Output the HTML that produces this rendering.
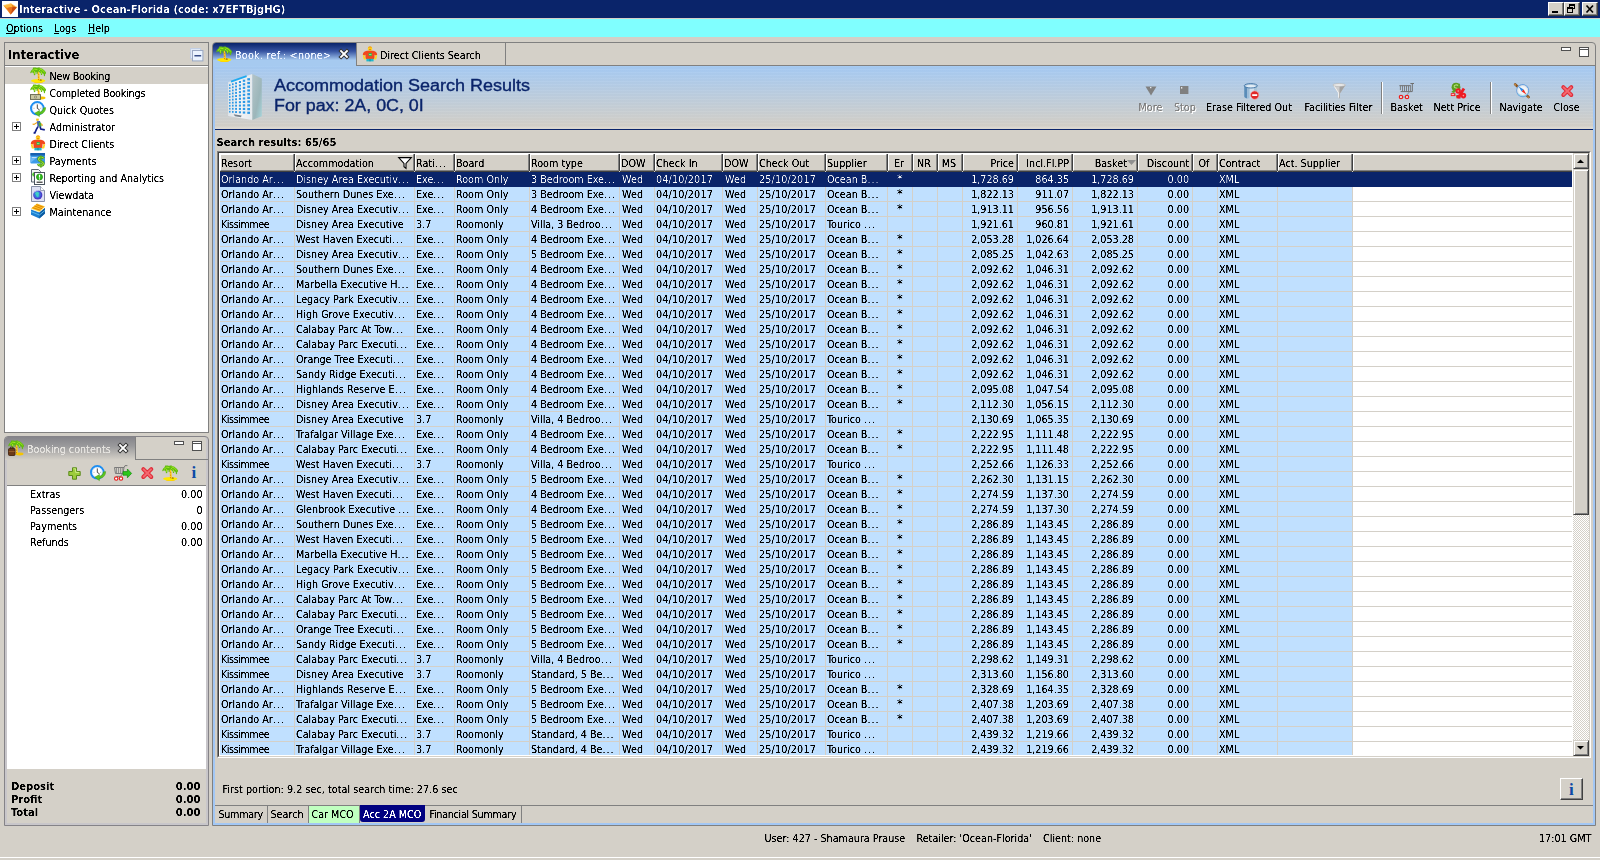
<!DOCTYPE html><html><head><meta charset="utf-8"><title>Interactive - Ocean-Florida</title><style>
*{box-sizing:border-box}
html,body{margin:0;padding:0}
body{width:1600px;height:860px;overflow:hidden;background:#d4d0c8;position:relative;font-family:"DejaVu Sans Condensed","Liberation Sans",sans-serif;font-size:10.7px;color:#000;line-height:13px}
.a{position:absolute;white-space:nowrap}
.b{font-weight:bold}
.t{filter:url(#cr)}
.t2{filter:url(#cr2)}
.t3{filter:url(#cr3)}
span.t{display:inline-block}
#flt{position:absolute;left:0;top:0;width:0;height:0}
svg{position:absolute;overflow:visible}
#tb{left:0;top:0;width:1600px;height:18px;background:#0a246a}
#tt{left:19px;top:3px;color:#fff;font-weight:bold;font-size:11.1px;line-height:14px}
.wb{top:2px;width:16px;height:14px;background:#d4d0c8;border:1px solid;border-color:#fff #404040 #404040 #fff;box-shadow:inset -1px -1px 0 #808080}
#mb{left:0;top:19px;width:1600px;height:18px;background:#80ffff}
.mi{top:22px}
.mi u{text-decoration:underline}
/* left panel */
#lp{left:4px;top:42px;width:205px;height:391px;border:1px solid #808080;background:#fff}
#lph{left:0;top:0;width:203px;height:23px;background:#d4d0c8;border-bottom:1px solid #808080}
#lpt{left:3px;top:4px;font-weight:bold;font-size:12.9px;line-height:16px}
.tr{left:0;width:203px;height:17px}
.tr span{position:absolute;left:44.5px;top:3px}
.pm{position:absolute;left:7px;top:4px;width:9px;height:9px;border:1px solid #808080;background:#fff}
.pm:before{content:"";position:absolute;left:1px;top:3px;width:5px;height:1px;background:#000}
.pm:after{content:"";position:absolute;left:3px;top:1px;width:1px;height:5px;background:#000}
/* booking contents */
#bc{left:4px;top:436px;width:205px;height:390px;border:1px solid #858388;border-radius:4px 4px 0 0;background:#d4d0c8;box-shadow:inset 2px 0 0 #c8c6ca,inset -2px 0 0 #c8c6ca,inset 0 -2px 0 #c8c6ca}
#bct{left:0;top:0;width:131px;height:23px;border-radius:3px 0 0 0;background:linear-gradient(#85848a,#9a9a9c 40%,#d4d0c8);border-right:1px solid #808080}
#bcl{left:2px;top:49px;width:199px;height:283px;background:#fff}
.br{left:30px}
.bv{right:1402.5px}
.tot{font-weight:bold;font-size:11.1px}
/* right panel */
#rp{left:212px;top:42px;width:1384px;height:784px;border:1px solid #808080;border-radius:4px 4px 0 0;background:#d4d0c8}
#rpi{left:213px;top:66px;width:1382px;height:759px;border:2px solid #a2c7f5;border-top:0}
#tab1{left:213px;top:43px;width:143px;height:23px;border-radius:3px 0 0 0;background:linear-gradient(#0a246a,#3552a0 35%,#a6caf0 75%)}
#tab2{left:356px;top:43px;width:150px;height:23px;border-right:1px solid #808080;border-left:1px solid #808080}
#tabline{left:356px;top:65px;width:1239px;height:1px;background:#808080}
#hd{left:215px;top:66px;width:1378px;height:63px;background:linear-gradient(#a4c9f2,#aacbf0 8%,#d4d0c8 96%,#dedad2 97%)}
#hd:after{content:"";position:absolute;left:0;top:0;right:0;bottom:0;background:repeating-linear-gradient(rgba(255,255,255,.035) 0 1px,rgba(0,0,40,.01) 1px 3px)}
#hdl{left:215px;top:129px;width:1378px;height:1px;background:#0a246a}
.ttl{left:274px;color:#0a246a;font-family:"Liberation Sans",sans-serif;font-size:16px;line-height:20px;transform:scaleX(1.115);transform-origin:0 0;-webkit-text-stroke:.35px #0a246a}
.tbt{top:101px;line-height:13px}
.dis{color:#808080;text-shadow:1px 1px 0 #fff}
.sep{top:82px;width:2px;height:32px;border-left:1px solid #808080;border-right:1px solid #fff}
/* table */
#tf{left:217px;top:151px;width:1374px;height:607px;border:1px solid;border-color:#808080 #fff #fff #808080;background:#fff}
#tf2{left:218px;top:152px;width:1372px;height:605px;border:1px solid;border-color:#404040 #d4d0c8 #d4d0c8 #404040}
#th{left:219px;top:153px;width:1353px;height:19px;background:#d4d0c8;border-left:1px solid #fff}
.h{position:absolute;top:0;height:19px;border:1px solid;border-color:#fff #808080 #808080 #fff;border-top-width:2px;padding:2px 2px 0 0;overflow:hidden;line-height:13px;box-shadow:1px 0 0 #404040,0 1px 0 #404040;height:18px}
#th:after{content:"";position:absolute;left:0;right:0;top:0;height:1px;background:#fff}
#rows{left:220px;top:172px;width:1352px;height:583px;overflow:hidden;background:
 repeating-linear-gradient(transparent 0 14px,#d4d0c8 14px 15px)}
#cells{left:0;top:0;width:1133px;height:583px;background:repeating-linear-gradient(#c0e0ff 0 14px,#d4d0c8 14px 15px)}
.vl{position:absolute;top:0;width:1px;height:583px;background:#d4d0c8}
.r{position:absolute;left:0;width:1352px;height:15px}
.r i{position:absolute;top:0;font-style:normal;line-height:13px;padding-top:1px;height:14px;overflow:hidden}
.sel{color:#fff}
.r i.c6,.r i.c8{letter-spacing:.15px}
.r i.c5,.r i.c7{padding-left:1px;letter-spacing:.1px}
.r i.c10{font-size:13px;line-height:13px;padding-top:0}
#rt{left:0;top:0;width:1352px;height:583px}
.r b,.h b{font-weight:normal;letter-spacing:.95px}
.c0{left:1px;width:72px}
.c1{left:76px;width:117px}
.c2{left:196px;width:37px}
.c3{left:236px;width:72px}
.c4{left:311px;width:87px}
.c5{left:401px;width:32px}
.c6{left:436px;width:65px}
.c7{left:504px;width:32px}
.c8{left:539px;width:65px}
.c9{left:607px;width:59px}
.c10{left:668px;width:24px;text-align:center}
.c11{left:693px;width:24px;text-align:center}
.c12{left:718px;width:24px;text-align:center}
.c13{left:743px;width:51px;text-align:right}
.c14{left:798px;width:51px;text-align:right}
.c15{left:853px;width:61px;text-align:right}
.c16{left:918px;width:51px;text-align:right}
.c17{left:973px;width:24px;text-align:center}
.c18{left:999px;width:57px}
.c19{left:1059px;width:72px}

/* scrollbar */
#sb{left:1573px;top:153px;width:16px;height:603px;background:repeating-conic-gradient(#fff 0 25%,#d4d0c8 0 50%) 0 0/2px 2px}
.sbb{position:absolute;left:0;width:16px;height:16px;background:#d4d0c8;border:1px solid;border-color:#d4d0c8 #404040 #404040 #d4d0c8;box-shadow:inset 1px 1px 0 #fff,inset -1px -1px 0 #808080}
#ibt{left:1560px;top:778px;width:23px;height:22px;background:#d4d0c8;border:1px solid;border-color:#fff #404040 #404040 #fff;box-shadow:inset -1px -1px 0 #808080}
#btl{left:215px;top:805px;width:1378px;height:1px;background:#808080}
.bt{top:806px;height:17px;line-height:13px;padding-top:2px;border-right:1px solid #808080}
#st{top:831.5px}
</style></head><body><svg id="flt" width="0" height="0"><filter id="cr" x="0" y="0" width="1" height="1" color-interpolation-filters="sRGB"><feComponentTransfer><feFuncA type="linear" slope="2.6" intercept="-0.55"/></feComponentTransfer></filter><filter id="cr3" x="0" y="0" width="1" height="1" color-interpolation-filters="sRGB"><feComponentTransfer><feFuncA type="linear" slope="2.2" intercept="-0.55"/></feComponentTransfer></filter><filter id="cr2" x="0" y="0" width="1" height="1" color-interpolation-filters="sRGB"><feComponentTransfer><feFuncA type="linear" slope="1.8" intercept="-0.6"/></feComponentTransfer></filter></svg><div class="a" id="tb"></div><svg style="left:2px;top:1px" width="16" height="16" viewBox="0 0 16 16"><rect width="16" height="16" fill="#fff"/><path d="M1.4 4.4 L9 2.6 L15 6.2 L8.6 13.6 Z" fill="#f28a1c"/><path d="M1.4 4.4 L9 2.6 L10.4 5.8 L5 7 Z" fill="#ffb63c"/><path d="M10.4 5.8 L15 6.2 L8.6 13.6 Z" fill="#c84a10"/><path d="M5 7 L10.4 5.8 L8.6 13.6 Z" fill="#e8701c"/><path d="M1.4 4.4 L9 2.6 L15 6.2" stroke="#ffe08a" stroke-width=".6" fill="none"/></svg><div class="a t2" id="tt">Interactive - Ocean-Florida (code: x7EFTBjgHG)</div><div class="a wb" style="left:1548px"><svg style="left:0;top:0" width="14" height="12" viewBox="0 0 14 12"><rect x="3" y="8" width="6" height="2" fill="#000"/></svg></div><div class="a wb" style="left:1564px"><svg style="left:0;top:0" width="14" height="12" viewBox="0 0 14 12"><rect x="4.5" y="1.5" width="5" height="4" fill="none" stroke="#000"/><rect x="4" y="1" width="6" height="2" fill="#000"/><rect x="2.5" y="4.5" width="5" height="5" fill="#d4d0c8" stroke="#000"/><rect x="2" y="4" width="6" height="2" fill="#000"/></svg></div><div class="a wb" style="left:1582px"><svg style="left:0;top:0" width="14" height="12" viewBox="0 0 14 12"><path d="M3.5 2.5 L10 9.5 M10 2.5 L3.5 9.5" stroke="#000" stroke-width="1.7"/></svg></div><div class="a" id="mb"></div><div class="a t mi" style="left:6px"><u>O</u>ptions</div><div class="a t mi" style="left:54px"><u>L</u>ogs</div><div class="a t mi" style="left:88px"><u>H</u>elp</div><div class="a" id="lp"><div class="a" id="lph"><div class="a t3" id="lpt">Interactive</div><svg style="left:185px;top:5px" width="14" height="14" viewBox="0 0 14 14"><rect x=".5" y=".5" width="10" height="10" fill="#dfe8f6" stroke="#c2cfe4"/><rect x="2.5" y="2.5" width="10.4" height="10.4" fill="#eaf3ff" stroke="#9aa8c4"/><rect x="4.4" y="7.2" width="6.8" height="1.2" fill="#0a246a"/></svg></div><div class="a tr" style="top:24px;background:#d4d0c8"><svg style="left:25px;top:0px" width="16" height="16" viewBox="0 0 16 16"><ellipse cx="8.4" cy="14.8" rx="5" ry="1.2" fill="#ffcc00"/><ellipse cx="8.2" cy="13.8" rx="7.1" ry="1.7" fill="#ffe800"/><ellipse cx="10.6" cy="13" rx="1.3" ry=".6" fill="#6a3c08"/><path d="M7.3 4.4 L8.7 4.2 L9.5 7 L9.9 13.4 L7.9 13.6 L7.7 8.6Z" fill="#ffd21a"/><path d="M8.4 6.6 L9.3 7.4 L8.6 8.4Z M8 9.6 L9 10 L8.2 11Z M8.1 12 L9.2 12.3 L8.3 13.4Z M7.5 4.6 L8.2 5.4 L7.6 6.6Z" fill="#cc5a0c"/><path d="M.2 5.6 L1.2 3.6 L2.6 2.2 L3.2 .6 L6 .4 L7 1 L8 .4 L9.6 .4 L10.4 1.2 L12 1.6 L13.6 2.8 L15 4 L16 5.4 L16 7 L15.2 6.6 L15 9 L14 9.2 L13.6 7 L12.4 6 L12 8 L11 8 L10.6 6 L9.6 5.4 L8.4 4.6 L7.7 5 L7.6 7 L6.6 7 L6.4 5 L5.6 5 L5.2 8 L4 8.2 L3.6 6 L2.6 5.4 L1.4 5.4 L1 6.4Z" fill="#62bc10"/><path d="M2 4.4 L4.6 2.2 L7.4 2.6 M9.6 1.8 L12.2 3 L14.6 5.2 M4.6 4 L4.6 6.8 M11.4 4.6 L11.6 6.8 M9 3 L10.4 4.4" stroke="#9ee81e" stroke-width="1" fill="none"/></svg><span class="t" style="letter-spacing:-.2px">New Booking</span></div><div class="a tr" style="top:41px"><svg style="left:25px;top:0px" width="16" height="16" viewBox="0 0 16 16"><ellipse cx="11.5" cy="14" rx="4" ry="1.4" fill="#f5c400"/><path d="M7.3 4.4 L8.7 4.2 L9.5 7 L9.9 13.4 L7.9 13.6 L7.7 8.6Z" fill="#ffd21a"/><path d="M8.4 6.6 L9.3 7.4 L8.6 8.4Z M8 9.6 L9 10 L8.2 11Z M8.1 12 L9.2 12.3 L8.3 13.4Z M7.5 4.6 L8.2 5.4 L7.6 6.6Z" fill="#cc5a0c"/><path d="M.2 5.6 L1.2 3.6 L2.6 2.2 L3.2 .6 L6 .4 L7 1 L8 .4 L9.6 .4 L10.4 1.2 L12 1.6 L13.6 2.8 L15 4 L16 5.4 L16 7 L15.2 6.6 L15 9 L14 9.2 L13.6 7 L12.4 6 L12 8 L11 8 L10.6 6 L9.6 5.4 L8.4 4.6 L7.7 5 L7.6 7 L6.6 7 L6.4 5 L5.6 5 L5.2 8 L4 8.2 L3.6 6 L2.6 5.4 L1.4 5.4 L1 6.4Z" fill="#62bc10"/><path d="M2 4.4 L4.6 2.2 L7.4 2.6 M9.6 1.8 L12.2 3 L14.6 5.2 M4.6 4 L4.6 6.8 M11.4 4.6 L11.6 6.8 M9 3 L10.4 4.4" stroke="#9ee81e" stroke-width="1" fill="none"/><rect x=".5" y="10.6" width="10" height="4.8" fill="#c9c7a2" stroke="#5f5f48" stroke-width=".9"/><circle cx="5.5" cy="13" r="1.5" fill="#8d8b70"/><circle cx="5.5" cy="13" r=".6" fill="#e8e6c8"/></svg><span class="t" style="letter-spacing:-.2px">Completed Bookings</span></div><div class="a tr" style="top:58px"><svg style="left:25px;top:0px" width="16" height="16" viewBox="0 0 16 16"><circle cx="7.3" cy="7.3" r="6.3" fill="#fff" stroke="#1b8df2" stroke-width="2"/><circle cx="7.3" cy="7.3" r="5" fill="none" stroke="#bcd8f2" stroke-width=".7"/><path d="M7.3 3.4v4l2.3 1.5" stroke="#333" stroke-width=".9" fill="none"/><path d="M3.6 7.3h.8M10.3 7.3h.8M7.3 3h0M7.3 11v.7" stroke="#777" stroke-width=".7"/><path d="M15.6 6.6 C15.6 10.8 12.6 13.4 9.4 13.2 L9.4 15.6 L4.8 12.2 L9.4 9.6 L9.4 11.2 C11.4 11 13 9.6 13.4 7 Z" fill="#5cc41e" stroke="#3a9a0c" stroke-width=".5"/></svg><span class="t">Quick Quotes</span></div><div class="a tr" style="top:75px"><div class="pm"></div><svg style="left:25px;top:0px" width="16" height="16" viewBox="0 0 16 16"><path d="M6 .8 L8.6 .4 L9 2.6 L6.6 3 Z" fill="#f5c518"/><path d="M6.8 3.2 L10 3 L11.4 8 L7.6 9 Z" fill="#3f5fae"/><path d="M8.4 4.6 L11 4.8 L11.6 8.6 L9.4 8.8 Z" fill="#4fae32"/><path d="M7 4.6 L4 6.4 L2.6 6.2" stroke="#f2a81c" stroke-width="1.2" fill="none"/><path d="M11.2 5.6 L12.6 7.6" stroke="#f2a81c" stroke-width="1.1"/><path d="M8 8.6 L6.4 11.4 L4.8 15 L3.6 14.6" stroke="#14208a" stroke-width="1.7" fill="none"/><path d="M10 8.6 L10.8 11 L14.8 11.8" stroke="#14208a" stroke-width="1.7" fill="none"/></svg><span class="t">Administrator</span></div><div class="a tr" style="top:92px"><svg style="left:25px;top:0px" width="16" height="16" viewBox="0 0 16 16"><circle cx="8" cy="2.8" r="2.3" fill="#ffd41c"/><path d="M6 1.6 C6.6 .2 9.4 .2 10 1.6Z" fill="#f08a10"/><path d="M7 3.4h2" stroke="#c8500c" stroke-width=".6"/><path d="M.8 9 C.8 6.4 2.6 5 5 4.8 L11 4.8 C13.4 5 15.2 6.4 15.2 9 L13.2 9.6 L12.6 8.4 L12.4 13 L3.6 13 L3.4 8.4 L2.8 9.6 Z" fill="#f2481c"/><path d="M1.6 9.2 L2.4 12.6 L3.8 12.8 M14.4 9.2 L13.6 12.6 L12.2 12.8" stroke="#ffd41c" stroke-width="1.7" fill="none"/><rect x="6.6" y="7" width="3.2" height="3" fill="#32b44a"/><path d="M7 8.6h2.4" stroke="#e8f8a0" stroke-width=".6"/><rect x="4.4" y="12.8" width="7.2" height="2.6" fill="#22b8cc"/><path d="M8 13v2.4" stroke="#0d7688" stroke-width=".7"/></svg><span class="t">Direct Clients</span></div><div class="a tr" style="top:109px"><div class="pm"></div><svg style="left:25px;top:0px" width="16" height="16" viewBox="0 0 16 16"><rect x=".4" y="1" width="14.6" height="10.6" rx="1" fill="#3b9be8"/><rect x=".4" y="1" width="14.6" height="2.6" fill="#1660b0"/><path d="M.6 6.4 L8 4.4 L.6 10.8Z" fill="#6cb8f4"/><rect x="1.6" y="5" width="5" height="1" fill="#bfe0fa"/><path d="M13.6 6.4 C12.6 4.6 8.4 4.8 8.6 7.4 C8.8 9.8 13.4 9 13.4 11.6 C13.2 14 9 14 8 12" stroke="#3e8a10" stroke-width="2.6" fill="none"/><path d="M13.6 6.4 C12.6 4.6 8.4 4.8 8.6 7.4 C8.8 9.8 13.4 9 13.4 11.6 C13.2 14 9 14 8 12" stroke="#9ade3c" stroke-width="1.3" fill="none"/><path d="M10.9 3.4v12.4" stroke="#5cae1c" stroke-width="1.3"/></svg><span class="t">Payments</span></div><div class="a tr" style="top:126px"><div class="pm"></div><svg style="left:25px;top:0px" width="16" height="16" viewBox="0 0 16 16"><path d="M1.5 .5h7l2 2v10.5h-9z" fill="#f4f4f4" stroke="#5a6670"/><circle cx="4.4" cy="5.4" r="2.2" fill="#4cc22a"/><rect x="4.5" y="3.5" width="10" height="12" fill="#fff" stroke="#4a545e"/><circle cx="9.5" cy="8" r="3.1" fill="#2eb81c" stroke="#1a8a0c" stroke-width=".6"/><path d="M9.5 5.8v2.8" stroke="#fff" stroke-width="1.2"/><circle cx="9.5" cy="9.9" r=".65" fill="#fff"/><path d="M6.6 13.2h6" stroke="#222" stroke-width="1.1"/></svg><span class="t">Reporting and Analytics</span></div><div class="a tr" style="top:143px"><svg style="left:25px;top:0px" width="16" height="16" viewBox="0 0 16 16"><path d="M1.5 .5h9l4 4v11h-13z" fill="#dfe2f4" stroke="#8890a8"/><path d="M10.5 .5v4h4" fill="#fff" stroke="#8890a8" stroke-width=".8"/><circle cx="7.8" cy="9" r="4.6" fill="#4a3cc8"/><circle cx="7.4" cy="8.6" r="3.4" fill="#3a74e0"/><path d="M5 7.4 C6 5.6 8.6 5.8 9.2 7.2 C8.2 8.6 9.6 9.6 8.2 11 C6.6 11.4 6.2 9.4 5 7.4Z" fill="#3ed0c4"/><path d="M4.6 6.4 C5.6 5 7 4.6 8.4 4.8" stroke="#cfe0ff" stroke-width=".8" fill="none"/></svg><span class="t">Viewdata</span></div><div class="a tr" style="top:160px"><div class="pm"></div><svg style="left:25px;top:0px" width="16" height="16" viewBox="0 0 16 16"><path d="M1 6.4 L9.4 9.6 L15 5 L15 10.4 L9.4 15.6 L1 11.8 Z" fill="#1d7fd0"/><path d="M9.4 9.6 L15 5 L15 10.4 L9.4 15.6Z" fill="#0d5aa0"/><path d="M1 8.6 L9.4 12 L15 7.4" stroke="#5cc0f4" stroke-width=".9" fill="none"/><path d="M1 5.6 L7 .6 L15 3.4 L9.4 8.8 Z" fill="#ffc21c"/><path d="M2.6 4.6 L10.8 7.4 M4.4 3 L12.4 5.8 M6.2 1.6 L13.8 4.4" stroke="#d87a0c" stroke-width=".9"/><path d="M1 5.6 L9.4 8.8 L15 3.4" stroke="#fff2a8" stroke-width=".6" fill="none"/></svg><span class="t">Maintenance</span></div></div><div class="a" id="bc"><div class="a" id="bct"><svg style="left:3px;top:3px" width="16" height="16" viewBox="0 0 16 16"><ellipse cx="11.5" cy="14" rx="4" ry="1.4" fill="#f5c400"/><path d="M7.3 4.4 L8.7 4.2 L9.5 7 L9.9 13.4 L7.9 13.6 L7.7 8.6Z" fill="#ffd21a"/><path d="M8.4 6.6 L9.3 7.4 L8.6 8.4Z M8 9.6 L9 10 L8.2 11Z M8.1 12 L9.2 12.3 L8.3 13.4Z M7.5 4.6 L8.2 5.4 L7.6 6.6Z" fill="#cc5a0c"/><path d="M.2 5.6 L1.2 3.6 L2.6 2.2 L3.2 .6 L6 .4 L7 1 L8 .4 L9.6 .4 L10.4 1.2 L12 1.6 L13.6 2.8 L15 4 L16 5.4 L16 7 L15.2 6.6 L15 9 L14 9.2 L13.6 7 L12.4 6 L12 8 L11 8 L10.6 6 L9.6 5.4 L8.4 4.6 L7.7 5 L7.6 7 L6.6 7 L6.4 5 L5.6 5 L5.2 8 L4 8.2 L3.6 6 L2.6 5.4 L1.4 5.4 L1 6.4Z" fill="#62bc10"/><path d="M2 4.4 L4.6 2.2 L7.4 2.6 M9.6 1.8 L12.2 3 L14.6 5.2 M4.6 4 L4.6 6.8 M11.4 4.6 L11.6 6.8 M9 3 L10.4 4.4" stroke="#9ee81e" stroke-width="1" fill="none"/><rect x=".5" y="8.5" width="6.5" height="7" rx="1" fill="#6b3a18" stroke="#3c1c08" stroke-width=".8"/><path d="M2.4 8.4v-1.3h2.7v1.3" stroke="#3c1c08" stroke-width=".8" fill="none"/><path d="M.8 11.5h6" stroke="#a86a32" stroke-width=".7"/></svg><div class="a t" style="left:22px;top:6px;color:#e4e2de">Booking contents</div><svg style="left:113px;top:6px" width="10" height="10" viewBox="0 0 10 10"><path d="M2.1 2.1 L7.9 7.9 M7.9 2.1 L2.1 7.9" stroke="#303030" stroke-width="3.8" stroke-linecap="square"/><path d="M2.1 2.1 L7.9 7.9 M7.9 2.1 L2.1 7.9" stroke="#fff" stroke-width="2" stroke-linecap="square"/></svg></div><svg style="left:169px;top:4px" width="30" height="12" viewBox="0 0 30 12"><rect x=".5" y=".5" width="9" height="3" fill="#fff" stroke="#505050"/><rect x="18.5" y=".5" width="9" height="9" fill="#fff" stroke="#505050"/><path d="M18 2.5h10" stroke="#505050"/></svg><div class="a" style="top:22px;height:1px;background:#808080;left:131px;width:72px"></div><div class="a" style="left:2px;top:24px;width:199px;height:25px;border-bottom:1px solid #808080"></div><svg style="left:63px;top:30px" width="13" height="13" viewBox="0 0 13 13"><path d="M4.5 .8h4v3.7h3.7v4h-3.7v3.7h-4v-3.7h-3.7v-4h3.7z" fill="#9ccc3c" stroke="#5a8a1c" stroke-width="1"/><path d="M5.4 1.8h2.2v3.6h3.6" stroke="#d0f08a" stroke-width=".9" fill="none"/></svg><svg style="left:85px;top:28px" width="16" height="16" viewBox="0 0 16 16"><circle cx="7.3" cy="7.3" r="6.3" fill="#fff" stroke="#1b8df2" stroke-width="2"/><circle cx="7.3" cy="7.3" r="5" fill="none" stroke="#bcd8f2" stroke-width=".7"/><path d="M7.3 3.4v4l2.3 1.5" stroke="#333" stroke-width=".9" fill="none"/><path d="M3.6 7.3h.8M10.3 7.3h.8M7.3 3h0M7.3 11v.7" stroke="#777" stroke-width=".7"/><path d="M15.6 6.6 C15.6 10.8 12.6 13.4 9.4 13.2 L9.4 15.6 L4.8 12.2 L9.4 9.6 L9.4 11.2 C11.4 11 13 9.6 13.4 7 Z" fill="#5cc41e" stroke="#3a9a0c" stroke-width=".5"/></svg><svg style="left:109px;top:28px" width="18" height="16" viewBox="0 0 18 16"><path d="M.5 2.5h9.5l-1 6h-7.5z" fill="none" stroke="#707070" stroke-width=".9"/><path d="M2.5 2.5v6M4.5 2.5v6M6.5 2.5v6M8.3 2.5v6" stroke="#808080" stroke-width=".8"/><path d="M10 2.6 L11 .6 h2.4" stroke="#707070" stroke-width=".9" fill="none"/><path d="M8.6 8.6 L6.6 11.4h-4" stroke="#707070" stroke-width=".9" fill="none"/><circle cx="2.2" cy="13.6" r="1.7" fill="#fff" stroke="#e81c1c" stroke-width="1.1"/><circle cx="7" cy="13.6" r="1.7" fill="#fff" stroke="#e81c1c" stroke-width="1.1"/><path d="M9 6.6h4.4v-2.6l4.2 4.4-4.2 4.4v-2.6h-4.4z" fill="#2cc81c" stroke="#148a0c" stroke-width=".7"/></svg><svg style="left:135.5px;top:30px" width="13" height="13" viewBox="0 0 13 13"><path d="M2.3 2.1 L10.3 10 M10.3 2.1 L2.3 10" stroke="#e02c38" stroke-width="4" stroke-linecap="round"/><path d="M2.6 2.4 L10 9.7 M10 2.4 L2.6 9.7" stroke="#f46870" stroke-width="2" stroke-linecap="round"/></svg><svg style="left:157px;top:28px" width="16" height="16" viewBox="0 0 16 16"><ellipse cx="8.4" cy="14.8" rx="5" ry="1.2" fill="#ffcc00"/><ellipse cx="8.2" cy="13.8" rx="7.1" ry="1.7" fill="#ffe800"/><ellipse cx="10.6" cy="13" rx="1.3" ry=".6" fill="#6a3c08"/><path d="M7.3 4.4 L8.7 4.2 L9.5 7 L9.9 13.4 L7.9 13.6 L7.7 8.6Z" fill="#ffd21a"/><path d="M8.4 6.6 L9.3 7.4 L8.6 8.4Z M8 9.6 L9 10 L8.2 11Z M8.1 12 L9.2 12.3 L8.3 13.4Z M7.5 4.6 L8.2 5.4 L7.6 6.6Z" fill="#cc5a0c"/><path d="M.2 5.6 L1.2 3.6 L2.6 2.2 L3.2 .6 L6 .4 L7 1 L8 .4 L9.6 .4 L10.4 1.2 L12 1.6 L13.6 2.8 L15 4 L16 5.4 L16 7 L15.2 6.6 L15 9 L14 9.2 L13.6 7 L12.4 6 L12 8 L11 8 L10.6 6 L9.6 5.4 L8.4 4.6 L7.7 5 L7.6 7 L6.6 7 L6.4 5 L5.6 5 L5.2 8 L4 8.2 L3.6 6 L2.6 5.4 L1.4 5.4 L1 6.4Z" fill="#62bc10"/><path d="M2 4.4 L4.6 2.2 L7.4 2.6 M9.6 1.8 L12.2 3 L14.6 5.2 M4.6 4 L4.6 6.8 M11.4 4.6 L11.6 6.8 M9 3 L10.4 4.4" stroke="#9ee81e" stroke-width="1" fill="none"/></svg><span style="position:absolute;left:186.5px;top:28px;font:bold 17px 'Liberation Serif',serif;line-height:16px;color:#0c4aa6">i</span><div class="a" id="bcl"></div></div><div class="a t br" style="top:487.5px">Extras</div><div class="a t" style="right:1397.5px;top:487.5px">0.00</div><div class="a t br" style="top:503.5px">Passengers</div><div class="a t" style="right:1397.5px;top:503.5px">0</div><div class="a t br" style="top:519.5px">Payments</div><div class="a t" style="right:1397.5px;top:519.5px">0.00</div><div class="a t br" style="top:535.5px">Refunds</div><div class="a t" style="right:1397.5px;top:535.5px">0.00</div><div class="a t3 tot" style="left:11px;top:779.5px">Deposit</div><div class="a t3 tot" style="right:1399.5px;top:779.5px">0.00</div><div class="a t3 tot" style="left:11px;top:792.5px">Profit</div><div class="a t3 tot" style="right:1399.5px;top:792.5px">0.00</div><div class="a t3 tot" style="left:11px;top:805.5px">Total</div><div class="a t3 tot" style="right:1399.5px;top:805.5px">0.00</div><div class="a" id="rp"></div><div class="a" id="rpi"></div><div class="a" id="tab1"><svg style="left:3px;top:3px" width="16" height="16" viewBox="0 0 16 16"><ellipse cx="8.4" cy="14.8" rx="5" ry="1.2" fill="#ffcc00"/><ellipse cx="8.2" cy="13.8" rx="7.1" ry="1.7" fill="#ffe800"/><ellipse cx="10.6" cy="13" rx="1.3" ry=".6" fill="#6a3c08"/><path d="M7.3 4.4 L8.7 4.2 L9.5 7 L9.9 13.4 L7.9 13.6 L7.7 8.6Z" fill="#ffd21a"/><path d="M8.4 6.6 L9.3 7.4 L8.6 8.4Z M8 9.6 L9 10 L8.2 11Z M8.1 12 L9.2 12.3 L8.3 13.4Z M7.5 4.6 L8.2 5.4 L7.6 6.6Z" fill="#cc5a0c"/><path d="M.2 5.6 L1.2 3.6 L2.6 2.2 L3.2 .6 L6 .4 L7 1 L8 .4 L9.6 .4 L10.4 1.2 L12 1.6 L13.6 2.8 L15 4 L16 5.4 L16 7 L15.2 6.6 L15 9 L14 9.2 L13.6 7 L12.4 6 L12 8 L11 8 L10.6 6 L9.6 5.4 L8.4 4.6 L7.7 5 L7.6 7 L6.6 7 L6.4 5 L5.6 5 L5.2 8 L4 8.2 L3.6 6 L2.6 5.4 L1.4 5.4 L1 6.4Z" fill="#62bc10"/><path d="M2 4.4 L4.6 2.2 L7.4 2.6 M9.6 1.8 L12.2 3 L14.6 5.2 M4.6 4 L4.6 6.8 M11.4 4.6 L11.6 6.8 M9 3 L10.4 4.4" stroke="#9ee81e" stroke-width="1" fill="none"/></svg><div class="a t" style="left:22px;top:6px;color:#e8f0ff;letter-spacing:.25px">Book. ref.: &lt;none&gt;</div><svg style="left:125.5px;top:6px" width="10" height="10" viewBox="0 0 10 10"><path d="M2.1 2.1 L7.9 7.9 M7.9 2.1 L2.1 7.9" stroke="#303030" stroke-width="3.8" stroke-linecap="square"/><path d="M2.1 2.1 L7.9 7.9 M7.9 2.1 L2.1 7.9" stroke="#fff" stroke-width="2" stroke-linecap="square"/></svg></div><div class="a" id="tab2"><svg style="left:5px;top:3px" width="16" height="16" viewBox="0 0 16 16"><circle cx="8" cy="2.8" r="2.3" fill="#ffd41c"/><path d="M6 1.6 C6.6 .2 9.4 .2 10 1.6Z" fill="#f08a10"/><path d="M7 3.4h2" stroke="#c8500c" stroke-width=".6"/><path d="M.8 9 C.8 6.4 2.6 5 5 4.8 L11 4.8 C13.4 5 15.2 6.4 15.2 9 L13.2 9.6 L12.6 8.4 L12.4 13 L3.6 13 L3.4 8.4 L2.8 9.6 Z" fill="#f2481c"/><path d="M1.6 9.2 L2.4 12.6 L3.8 12.8 M14.4 9.2 L13.6 12.6 L12.2 12.8" stroke="#ffd41c" stroke-width="1.7" fill="none"/><rect x="6.6" y="7" width="3.2" height="3" fill="#32b44a"/><path d="M7 8.6h2.4" stroke="#e8f8a0" stroke-width=".6"/><rect x="4.4" y="12.8" width="7.2" height="2.6" fill="#22b8cc"/><path d="M8 13v2.4" stroke="#0d7688" stroke-width=".7"/></svg><div class="a t" style="left:23px;top:6px">Direct Clients Search</div></div><div class="a" id="tabline"></div><div class="a" style="left:1396px;top:0"></div><div class="a" style="left:212px;top:42px;width:0;height:0"><svg style="left:1349px;top:5px" width="30" height="12" viewBox="0 0 30 12"><rect x=".5" y=".5" width="9" height="3" fill="#fff" stroke="#505050"/><rect x="18.5" y=".5" width="9" height="9" fill="#fff" stroke="#505050"/><path d="M18 2.5h10" stroke="#505050"/></svg></div><div class="a" id="hd"></div><div class="a" id="hdl"></div><svg style="left:227px;top:73px" width="36" height="48" viewBox="0 0 36 48"><defs><linearGradient id="bg1" x1="0" x2="1"><stop offset="0" stop-color="#dfe5ea"/><stop offset=".5" stop-color="#f2f4f6"/><stop offset="1" stop-color="#e4e9ed"/></linearGradient><linearGradient id="bg2" x1="0" x2="1" y1="0" y2="1"><stop offset="0" stop-color="#b4c4c8"/><stop offset=".6" stop-color="#9cb6ba"/><stop offset="1" stop-color="#a6d6dc"/></linearGradient></defs><path d="M1.1 9.2 L25.4 1.1 L25.4 47 L1.1 42.9 Z" fill="url(#bg1)"/><path d="M25.4 1.1 L34.8 5.5 L34.8 43.2 L25.4 47 Z" fill="url(#bg2)"/><path d="M4 8.6 L19.6 3.2" stroke="#1eaaf0" stroke-width="1.8"/><rect x="2.1" y="11.3" width="1.4" height="1.7" fill="#2b98e6"/><rect x="2.1" y="14.2" width="1.4" height="1.7" fill="#2b98e6"/><rect x="2.1" y="17.2" width="1.4" height="1.7" fill="#2b98e6"/><rect x="2.1" y="20.2" width="1.4" height="1.7" fill="#2b98e6"/><rect x="2.1" y="23.1" width="1.4" height="1.7" fill="#2b98e6"/><rect x="2.1" y="26.1" width="1.4" height="1.7" fill="#2b98e6"/><rect x="2.1" y="29.0" width="1.4" height="1.7" fill="#2b98e6"/><rect x="2.1" y="32.0" width="1.4" height="1.7" fill="#2b98e6"/><rect x="2.1" y="34.9" width="1.4" height="1.7" fill="#2b98e6"/><rect x="2.1" y="37.9" width="1.4" height="1.7" fill="#2b98e6"/><rect x="5.0" y="10.3" width="1.6" height="1.8" fill="#2b98e6"/><rect x="5.0" y="13.4" width="1.6" height="1.8" fill="#2b98e6"/><rect x="5.0" y="16.5" width="1.6" height="1.8" fill="#2b98e6"/><rect x="5.0" y="19.5" width="1.6" height="1.8" fill="#2b98e6"/><rect x="5.0" y="22.6" width="1.6" height="1.8" fill="#2b98e6"/><rect x="5.0" y="25.7" width="1.6" height="1.8" fill="#2b98e6"/><rect x="5.0" y="28.8" width="1.6" height="1.8" fill="#2b98e6"/><rect x="5.0" y="31.8" width="1.6" height="1.8" fill="#2b98e6"/><rect x="5.0" y="34.9" width="1.6" height="1.8" fill="#2b98e6"/><rect x="5.0" y="38.0" width="1.6" height="1.8" fill="#2b98e6"/><rect x="8.1" y="9.3" width="1.9" height="1.9" fill="#2b98e6"/><rect x="8.1" y="12.5" width="1.9" height="1.9" fill="#2b98e6"/><rect x="8.1" y="15.7" width="1.9" height="1.9" fill="#2b98e6"/><rect x="8.1" y="18.9" width="1.9" height="1.9" fill="#2b98e6"/><rect x="8.1" y="22.1" width="1.9" height="1.9" fill="#2b98e6"/><rect x="8.1" y="25.3" width="1.9" height="1.9" fill="#2b98e6"/><rect x="8.1" y="28.5" width="1.9" height="1.9" fill="#2b98e6"/><rect x="8.1" y="31.7" width="1.9" height="1.9" fill="#2b98e6"/><rect x="8.1" y="34.9" width="1.9" height="1.9" fill="#2b98e6"/><rect x="8.1" y="38.1" width="1.9" height="1.9" fill="#2b98e6"/><rect x="11.9" y="8.0" width="2.1" height="2.0" fill="#2b98e6"/><rect x="11.9" y="11.4" width="2.1" height="2.0" fill="#2b98e6"/><rect x="11.9" y="14.7" width="2.1" height="2.0" fill="#2b98e6"/><rect x="11.9" y="18.1" width="2.1" height="2.0" fill="#2b98e6"/><rect x="11.9" y="21.5" width="2.1" height="2.0" fill="#2b98e6"/><rect x="11.9" y="24.8" width="2.1" height="2.0" fill="#2b98e6"/><rect x="11.9" y="28.2" width="2.1" height="2.0" fill="#2b98e6"/><rect x="11.9" y="31.6" width="2.1" height="2.0" fill="#2b98e6"/><rect x="11.9" y="34.9" width="2.1" height="2.0" fill="#2b98e6"/><rect x="11.9" y="38.3" width="2.1" height="2.0" fill="#2b98e6"/><rect x="15.8" y="6.7" width="2.4" height="2.1" fill="#2b98e6"/><rect x="15.8" y="10.2" width="2.4" height="2.1" fill="#2b98e6"/><rect x="15.8" y="13.8" width="2.4" height="2.1" fill="#2b98e6"/><rect x="15.8" y="17.3" width="2.4" height="2.1" fill="#2b98e6"/><rect x="15.8" y="20.8" width="2.4" height="2.1" fill="#2b98e6"/><rect x="15.8" y="24.4" width="2.4" height="2.1" fill="#2b98e6"/><rect x="15.8" y="27.9" width="2.4" height="2.1" fill="#2b98e6"/><rect x="15.8" y="31.4" width="2.4" height="2.1" fill="#2b98e6"/><rect x="15.8" y="34.9" width="2.4" height="2.1" fill="#2b98e6"/><rect x="15.8" y="38.5" width="2.4" height="2.1" fill="#2b98e6"/><rect x="20.3" y="5.2" width="2.7" height="2.2" fill="#2b98e6"/><rect x="20.3" y="8.9" width="2.7" height="2.2" fill="#2b98e6"/><rect x="20.3" y="12.6" width="2.7" height="2.2" fill="#2b98e6"/><rect x="20.3" y="16.4" width="2.7" height="2.2" fill="#2b98e6"/><rect x="20.3" y="20.1" width="2.7" height="2.2" fill="#2b98e6"/><rect x="20.3" y="23.8" width="2.7" height="2.2" fill="#2b98e6"/><rect x="20.3" y="27.5" width="2.7" height="2.2" fill="#2b98e6"/><rect x="20.3" y="31.2" width="2.7" height="2.2" fill="#2b98e6"/><rect x="20.3" y="35.0" width="2.7" height="2.2" fill="#2b98e6"/><rect x="20.3" y="38.7" width="2.7" height="2.2" fill="#2b98e6"/><path d="M6.6 41.2 L14.6 42.6 L14 44.2 L8 43.2Z" fill="#77828c"/></svg><div class="a ttl" style="top:76px;transform:scaleX(1.124)">Accommodation Search Results</div><div class="a ttl" style="top:96px">For pax: 2A, 0C, 0I</div><div class="a t tbt dis" style="left:1138.5px">More</div><svg style="left:1145px;top:86px" width="12" height="10" viewBox="0 0 12 10"><path d="M.5 .5h11L6 9.6Z" fill="#808080"/><rect x="5" y="1" width="1.4" height="1.2" fill="#e8e8e8"/></svg><div class="a t tbt dis" style="left:1174px">Stop</div><svg style="left:1180px;top:86px" width="9" height="9" viewBox="0 0 9 9"><rect width="8.4" height="8" fill="#808080"/><rect x="1" y="1" width="1.3" height="1.6" fill="#e8e8e8"/></svg><div class="a t tbt " style="left:1206px">Erase Filtered Out</div><svg style="left:1243px;top:83px" width="16" height="16" viewBox="0 0 16 16"><path d="M1.2 2.8v10.6c0 1.3 3 2.2 6.6 2.2s6.6-.9 6.6-2.2V2.8z" fill="#cfe0ee"/><path d="M1.2 2.8v10.6c0 1 1.6 1.7 3.2 2V4.6z" fill="#5a8cb8"/><path d="M4.4 4.6v10.8c.8.1 1.4.2 2.2.2V4.8z" fill="#9cbcd8"/><path d="M11 4.6v10.6c2-.3 3.4-1 3.4-1.8V2.8z" fill="#a8c4d8"/><ellipse cx="7.8" cy="2.8" rx="6.6" ry="2.2" fill="#b4cce0" stroke="#4a7cac" stroke-width="1"/><ellipse cx="7.8" cy="3.1" rx="4.6" ry="1.2" fill="#e4eef6"/><circle cx="11.7" cy="12.1" r="4.2" fill="#e02828" stroke="#f4a8a8" stroke-width=".7"/><rect x="9.2" y="11.2" width="5" height="1.8" fill="#fff"/></svg><div class="a t tbt " style="left:1304.5px">Facilities Filter</div><svg style="left:1331px;top:83px" width="16" height="16" viewBox="0 0 16 16"><path d="M1.8 2 C3.4 .4 13 .4 14.6 2 L9 10.4 V15 L7.4 15.8 V10.4 Z" fill="#cdcdcd"/><path d="M8.6 2.4 L14.6 2 L9 10.4 V15 L8.2 15.4 Z" fill="#a2a2a2"/><ellipse cx="8.2" cy="2" rx="6.4" ry="1.4" fill="#ececec" stroke="#b0b0b0" stroke-width=".6"/><path d="M3.4 3.4 L7.6 10 V14.6" stroke="#f6f6f6" stroke-width=".9" fill="none"/></svg><div class="a t tbt " style="left:1390.5px">Basket</div><svg style="left:1398px;top:83px" width="16" height="16" viewBox="0 0 16 16"><path d="M1.4 2.7h11.4M2.6 8.6h11.6M14.3 .5v8.1M12.4 .5h3.6" stroke="#6e6e6e" stroke-width="1" fill="none"/><path d="M2.4 2.7v4.4M4.5 2.7v5.9M6.5 2.7v5.9M8.5 2.7v5.9M10.5 2.7v5.9M12.4 2.7v5.9" stroke="#767676" stroke-width=".9"/><path d="M11.4 8.8 L9.4 11.4 L9 13" stroke="#7a8a8e" stroke-width=".9" fill="none"/><path d="M3 14h6" stroke="#8a8a8a" stroke-width=".8"/><circle cx="3" cy="14" r="1.7" fill="#d8f4f4" stroke="#f01c1c" stroke-width="1.2"/><circle cx="9" cy="14" r="1.7" fill="#d8f4f4" stroke="#f01c1c" stroke-width="1.2"/></svg><div class="a t tbt " style="left:1433.5px">Nett Price</div><svg style="left:1450px;top:83px" width="17" height="16" viewBox="0 0 17 16"><circle cx="6" cy="4.2" r="4.4" fill="#5c9e1e"/><path d="M2.4 2 L3.4 .6 L5 1 L6.4 0 L8 .8 L9.6 .4 L10.2 2Z M1.2 9 L3 7.4 L5.6 8.6 L4 10Z" fill="#5c9e1e"/><path d="M8 2.6 C7 1.4 3.8 1.8 4.2 3.8 C4.6 5.4 7.6 4.8 7.8 6.4" stroke="#b4dc78" stroke-width="1.1" fill="none"/><rect x=".8" y="10.2" width="4.6" height="2.9" fill="#ee1c24"/><rect x="1.6" y="11.2" width="2.6" height=".9" fill="#ffe0e0"/><path d="M5.6 12.4 L7.6 12.2 L6.8 15 Z" fill="#6aa82a"/><circle cx="8.2" cy="8" r="2.7" fill="#ee1c24"/><circle cx="13.4" cy="12.6" r="2.8" fill="#ee1c24"/><path d="M14 5.4 L8 15" stroke="#ee1c24" stroke-width="2.8"/><circle cx="8.2" cy="8" r=".8" fill="#ff9c9c"/><circle cx="13.4" cy="12.6" r=".8" fill="#ff9c9c"/><rect x="6.6" y="12" width="4" height="3.4" fill="#ee1c24"/></svg><div class="a t tbt " style="left:1499.5px">Navigate</div><svg style="left:1513px;top:83px" width="17" height="16" viewBox="0 0 17 16"><path d="M2.2 1.4 L4.6 3.6 M13.8 12.4 L15.6 14.2" stroke="#8a5420" stroke-width="2.6" stroke-linecap="round"/><path d="M1.6 1.2 L2.8 2.4 M14.6 13.6 L15.6 14.6" stroke="#d8a054" stroke-width="1.1"/><circle cx="9.7" cy="7.6" r="6" fill="#f2f5f8" stroke="#6aa0dc" stroke-width="1.1"/><path d="M4.6 10 A5.6 5.6 0 0 0 15 9.6 A7 7 0 0 1 4.6 10Z" fill="#7ad4ec"/><circle cx="9.7" cy="7.6" r="4.9" fill="none" stroke="#d4dce6" stroke-width=".8"/><path d="M5.6 3.6 L10.7 6.6 L8.7 8.6Z" fill="#2a86e4"/><path d="M13.4 11.6 L8.7 8.6 L10.7 6.6Z" fill="#f02a1c"/></svg><div class="a t tbt " style="left:1553.5px">Close</div><svg style="left:1561px;top:85px" width="13" height="13" viewBox="0 0 13 13"><path d="M2.3 2.1 L10.3 10 M10.3 2.1 L2.3 10" stroke="#e02c38" stroke-width="4" stroke-linecap="round"/><path d="M2.6 2.4 L10 9.7 M10 2.4 L2.6 9.7" stroke="#f46870" stroke-width="2" stroke-linecap="round"/></svg><div class="a sep" style="left:1381px"></div><div class="a sep" style="left:1490px"></div><div class="a t3 b" style="left:216.5px;top:135.5px;font-size:11.1px">Search results: 65/65</div><div class="a" id="tf"></div><div class="a" id="tf2"></div><div class="a" id="th"><div class="h" style="left:0px;width:74px;text-align:left;"><span class="t">Resort</span></div><div class="h" style="left:75px;width:119px;text-align:left;"><span class="t">Accommodation</span><svg style="right:1px;top:2px" width="14" height="12" viewBox="0 0 14 12"><path d="M.7 .6 H13.3 L8 6.4 V11.4 L6 9.8 V6.4 Z" fill="#fff" stroke="#000" stroke-width="1.1"/></svg></div><div class="h" style="left:195px;width:39px;text-align:left;"><span class="t">Rati<b>...</b></span></div><div class="h" style="left:235px;width:74px;text-align:left;"><span class="t">Board</span></div><div class="h" style="left:310px;width:89px;text-align:left;"><span class="t">Room type</span></div><div class="h" style="left:400px;width:34px;text-align:left;"><span class="t">DOW</span></div><div class="h" style="left:435px;width:67px;text-align:left;"><span class="t">Check In</span></div><div class="h" style="left:503px;width:34px;text-align:left;"><span class="t">DOW</span></div><div class="h" style="left:538px;width:67px;text-align:left;"><span class="t">Check Out</span></div><div class="h" style="left:606px;width:61px;text-align:left;"><span class="t">Supplier</span></div><div class="h" style="left:668px;width:24px;text-align:center;"><span class="t">Er</span></div><div class="h" style="left:693px;width:24px;text-align:center;"><span class="t">NR</span></div><div class="h" style="left:718px;width:24px;text-align:center;"><span class="t">MS</span></div><div class="h" style="left:743px;width:54px;text-align:right;"><span class="t">Price</span></div><div class="h" style="left:798px;width:54px;text-align:right;"><span class="t">Incl.Fl.PP</span></div><div class="h" style="left:853px;width:64px;text-align:right;padding-right:9px;"><span class="t">Basket</span><svg style="right:0px;top:5px" width="9" height="5" viewBox="0 0 9 5"><path d="M0 0 H9 L4.5 5 Z" fill="#909090"/></svg></div><div class="h" style="left:918px;width:54px;text-align:right;"><span class="t">Discount</span></div><div class="h" style="left:973px;width:24px;text-align:center;"><span class="t">Of</span></div><div class="h" style="left:998px;width:59px;text-align:left;"><span class="t">Contract</span></div><div class="h" style="left:1058px;width:74px;text-align:left;"><span class="t">Act. Supplier</span></div><div class="h" style="left:1133px;width:219px;box-shadow:0 1px 0 #404040;border-right:0"></div></div><div class="a" id="rows"><div class="a" id="cells"><div class="vl" style="left:74px"></div><div class="vl" style="left:194px"></div><div class="vl" style="left:234px"></div><div class="vl" style="left:309px"></div><div class="vl" style="left:399px"></div><div class="vl" style="left:434px"></div><div class="vl" style="left:502px"></div><div class="vl" style="left:537px"></div><div class="vl" style="left:605px"></div><div class="vl" style="left:667px"></div><div class="vl" style="left:692px"></div><div class="vl" style="left:717px"></div><div class="vl" style="left:742px"></div><div class="vl" style="left:797px"></div><div class="vl" style="left:852px"></div><div class="vl" style="left:917px"></div><div class="vl" style="left:972px"></div><div class="vl" style="left:997px"></div><div class="vl" style="left:1057px"></div><div class="vl" style="left:1132px"></div></div><div class="a" style="left:0;top:0;width:1352px;height:15px;background:#0a246a"></div><div class="a t2" style="left:0;top:0;width:1352px;height:15px"><div class="r sel" style="top:0px"><i class="c0">Orlando Ar<b>...</b></i><i class="c1">Disney Area Executiv<b>...</b></i><i class="c2">Exe<b>...</b></i><i class="c3">Room Only</i><i class="c4">3 Bedroom Exe<b>...</b></i><i class="c5">Wed</i><i class="c6">04/10/2017</i><i class="c7">Wed</i><i class="c8">25/10/2017</i><i class="c9">Ocean B<b>...</b></i><i class="c10">*</i><i class="c13">1,728.69</i><i class="c14">864.35</i><i class="c15">1,728.69</i><i class="c16">0.00</i><i class="c18">XML</i></div></div><div class="a t" id="rt"><div class="r" style="top:15px"><i class="c0">Orlando Ar<b>...</b></i><i class="c1">Southern Dunes Exe<b>...</b></i><i class="c2">Exe<b>...</b></i><i class="c3">Room Only</i><i class="c4">3 Bedroom Exe<b>...</b></i><i class="c5">Wed</i><i class="c6">04/10/2017</i><i class="c7">Wed</i><i class="c8">25/10/2017</i><i class="c9">Ocean B<b>...</b></i><i class="c10">*</i><i class="c13">1,822.13</i><i class="c14">911.07</i><i class="c15">1,822.13</i><i class="c16">0.00</i><i class="c18">XML</i></div><div class="r" style="top:30px"><i class="c0">Orlando Ar<b>...</b></i><i class="c1">Disney Area Executiv<b>...</b></i><i class="c2">Exe<b>...</b></i><i class="c3">Room Only</i><i class="c4">4 Bedroom Exe<b>...</b></i><i class="c5">Wed</i><i class="c6">04/10/2017</i><i class="c7">Wed</i><i class="c8">25/10/2017</i><i class="c9">Ocean B<b>...</b></i><i class="c10">*</i><i class="c13">1,913.11</i><i class="c14">956.56</i><i class="c15">1,913.11</i><i class="c16">0.00</i><i class="c18">XML</i></div><div class="r" style="top:45px"><i class="c0" style="letter-spacing:-.45px">Kissimmee</i><i class="c1">Disney Area Executive</i><i class="c2">3.7</i><i class="c3">Roomonly</i><i class="c4">Villa, 3 Bedroo<b>...</b></i><i class="c5">Wed</i><i class="c6">04/10/2017</i><i class="c7">Wed</i><i class="c8">25/10/2017</i><i class="c9">Tourico <b>...</b></i><i class="c13">1,921.61</i><i class="c14">960.81</i><i class="c15">1,921.61</i><i class="c16">0.00</i><i class="c18">XML</i></div><div class="r" style="top:60px"><i class="c0">Orlando Ar<b>...</b></i><i class="c1">West Haven Executi<b>...</b></i><i class="c2">Exe<b>...</b></i><i class="c3">Room Only</i><i class="c4">4 Bedroom Exe<b>...</b></i><i class="c5">Wed</i><i class="c6">04/10/2017</i><i class="c7">Wed</i><i class="c8">25/10/2017</i><i class="c9">Ocean B<b>...</b></i><i class="c10">*</i><i class="c13">2,053.28</i><i class="c14">1,026.64</i><i class="c15">2,053.28</i><i class="c16">0.00</i><i class="c18">XML</i></div><div class="r" style="top:75px"><i class="c0">Orlando Ar<b>...</b></i><i class="c1">Disney Area Executiv<b>...</b></i><i class="c2">Exe<b>...</b></i><i class="c3">Room Only</i><i class="c4">5 Bedroom Exe<b>...</b></i><i class="c5">Wed</i><i class="c6">04/10/2017</i><i class="c7">Wed</i><i class="c8">25/10/2017</i><i class="c9">Ocean B<b>...</b></i><i class="c10">*</i><i class="c13">2,085.25</i><i class="c14">1,042.63</i><i class="c15">2,085.25</i><i class="c16">0.00</i><i class="c18">XML</i></div><div class="r" style="top:90px"><i class="c0">Orlando Ar<b>...</b></i><i class="c1">Southern Dunes Exe<b>...</b></i><i class="c2">Exe<b>...</b></i><i class="c3">Room Only</i><i class="c4">4 Bedroom Exe<b>...</b></i><i class="c5">Wed</i><i class="c6">04/10/2017</i><i class="c7">Wed</i><i class="c8">25/10/2017</i><i class="c9">Ocean B<b>...</b></i><i class="c10">*</i><i class="c13">2,092.62</i><i class="c14">1,046.31</i><i class="c15">2,092.62</i><i class="c16">0.00</i><i class="c18">XML</i></div><div class="r" style="top:105px"><i class="c0">Orlando Ar<b>...</b></i><i class="c1">Marbella Executive H<b>...</b></i><i class="c2">Exe<b>...</b></i><i class="c3">Room Only</i><i class="c4">4 Bedroom Exe<b>...</b></i><i class="c5">Wed</i><i class="c6">04/10/2017</i><i class="c7">Wed</i><i class="c8">25/10/2017</i><i class="c9">Ocean B<b>...</b></i><i class="c10">*</i><i class="c13">2,092.62</i><i class="c14">1,046.31</i><i class="c15">2,092.62</i><i class="c16">0.00</i><i class="c18">XML</i></div><div class="r" style="top:120px"><i class="c0">Orlando Ar<b>...</b></i><i class="c1">Legacy Park Executiv<b>...</b></i><i class="c2">Exe<b>...</b></i><i class="c3">Room Only</i><i class="c4">4 Bedroom Exe<b>...</b></i><i class="c5">Wed</i><i class="c6">04/10/2017</i><i class="c7">Wed</i><i class="c8">25/10/2017</i><i class="c9">Ocean B<b>...</b></i><i class="c10">*</i><i class="c13">2,092.62</i><i class="c14">1,046.31</i><i class="c15">2,092.62</i><i class="c16">0.00</i><i class="c18">XML</i></div><div class="r" style="top:135px"><i class="c0">Orlando Ar<b>...</b></i><i class="c1">High Grove Executiv<b>...</b></i><i class="c2">Exe<b>...</b></i><i class="c3">Room Only</i><i class="c4">4 Bedroom Exe<b>...</b></i><i class="c5">Wed</i><i class="c6">04/10/2017</i><i class="c7">Wed</i><i class="c8">25/10/2017</i><i class="c9">Ocean B<b>...</b></i><i class="c10">*</i><i class="c13">2,092.62</i><i class="c14">1,046.31</i><i class="c15">2,092.62</i><i class="c16">0.00</i><i class="c18">XML</i></div><div class="r" style="top:150px"><i class="c0">Orlando Ar<b>...</b></i><i class="c1">Calabay Parc At Tow<b>...</b></i><i class="c2">Exe<b>...</b></i><i class="c3">Room Only</i><i class="c4">4 Bedroom Exe<b>...</b></i><i class="c5">Wed</i><i class="c6">04/10/2017</i><i class="c7">Wed</i><i class="c8">25/10/2017</i><i class="c9">Ocean B<b>...</b></i><i class="c10">*</i><i class="c13">2,092.62</i><i class="c14">1,046.31</i><i class="c15">2,092.62</i><i class="c16">0.00</i><i class="c18">XML</i></div><div class="r" style="top:165px"><i class="c0">Orlando Ar<b>...</b></i><i class="c1">Calabay Parc Executi<b>...</b></i><i class="c2">Exe<b>...</b></i><i class="c3">Room Only</i><i class="c4">4 Bedroom Exe<b>...</b></i><i class="c5">Wed</i><i class="c6">04/10/2017</i><i class="c7">Wed</i><i class="c8">25/10/2017</i><i class="c9">Ocean B<b>...</b></i><i class="c10">*</i><i class="c13">2,092.62</i><i class="c14">1,046.31</i><i class="c15">2,092.62</i><i class="c16">0.00</i><i class="c18">XML</i></div><div class="r" style="top:180px"><i class="c0">Orlando Ar<b>...</b></i><i class="c1">Orange Tree Executi<b>...</b></i><i class="c2">Exe<b>...</b></i><i class="c3">Room Only</i><i class="c4">4 Bedroom Exe<b>...</b></i><i class="c5">Wed</i><i class="c6">04/10/2017</i><i class="c7">Wed</i><i class="c8">25/10/2017</i><i class="c9">Ocean B<b>...</b></i><i class="c10">*</i><i class="c13">2,092.62</i><i class="c14">1,046.31</i><i class="c15">2,092.62</i><i class="c16">0.00</i><i class="c18">XML</i></div><div class="r" style="top:195px"><i class="c0">Orlando Ar<b>...</b></i><i class="c1">Sandy Ridge Executi<b>...</b></i><i class="c2">Exe<b>...</b></i><i class="c3">Room Only</i><i class="c4">4 Bedroom Exe<b>...</b></i><i class="c5">Wed</i><i class="c6">04/10/2017</i><i class="c7">Wed</i><i class="c8">25/10/2017</i><i class="c9">Ocean B<b>...</b></i><i class="c10">*</i><i class="c13">2,092.62</i><i class="c14">1,046.31</i><i class="c15">2,092.62</i><i class="c16">0.00</i><i class="c18">XML</i></div><div class="r" style="top:210px"><i class="c0">Orlando Ar<b>...</b></i><i class="c1">Highlands Reserve E<b>...</b></i><i class="c2">Exe<b>...</b></i><i class="c3">Room Only</i><i class="c4">4 Bedroom Exe<b>...</b></i><i class="c5">Wed</i><i class="c6">04/10/2017</i><i class="c7">Wed</i><i class="c8">25/10/2017</i><i class="c9">Ocean B<b>...</b></i><i class="c10">*</i><i class="c13">2,095.08</i><i class="c14">1,047.54</i><i class="c15">2,095.08</i><i class="c16">0.00</i><i class="c18">XML</i></div><div class="r" style="top:225px"><i class="c0">Orlando Ar<b>...</b></i><i class="c1">Disney Area Executiv<b>...</b></i><i class="c2">Exe<b>...</b></i><i class="c3">Room Only</i><i class="c4">4 Bedroom Exe<b>...</b></i><i class="c5">Wed</i><i class="c6">04/10/2017</i><i class="c7">Wed</i><i class="c8">25/10/2017</i><i class="c9">Ocean B<b>...</b></i><i class="c10">*</i><i class="c13">2,112.30</i><i class="c14">1,056.15</i><i class="c15">2,112.30</i><i class="c16">0.00</i><i class="c18">XML</i></div><div class="r" style="top:240px"><i class="c0" style="letter-spacing:-.45px">Kissimmee</i><i class="c1">Disney Area Executive</i><i class="c2">3.7</i><i class="c3">Roomonly</i><i class="c4">Villa, 4 Bedroo<b>...</b></i><i class="c5">Wed</i><i class="c6">04/10/2017</i><i class="c7">Wed</i><i class="c8">25/10/2017</i><i class="c9">Tourico <b>...</b></i><i class="c13">2,130.69</i><i class="c14">1,065.35</i><i class="c15">2,130.69</i><i class="c16">0.00</i><i class="c18">XML</i></div><div class="r" style="top:255px"><i class="c0">Orlando Ar<b>...</b></i><i class="c1">Trafalgar Village Exe<b>...</b></i><i class="c2">Exe<b>...</b></i><i class="c3">Room Only</i><i class="c4">4 Bedroom Exe<b>...</b></i><i class="c5">Wed</i><i class="c6">04/10/2017</i><i class="c7">Wed</i><i class="c8">25/10/2017</i><i class="c9">Ocean B<b>...</b></i><i class="c10">*</i><i class="c13">2,222.95</i><i class="c14">1,111.48</i><i class="c15">2,222.95</i><i class="c16">0.00</i><i class="c18">XML</i></div><div class="r" style="top:270px"><i class="c0">Orlando Ar<b>...</b></i><i class="c1">Calabay Parc Executi<b>...</b></i><i class="c2">Exe<b>...</b></i><i class="c3">Room Only</i><i class="c4">4 Bedroom Exe<b>...</b></i><i class="c5">Wed</i><i class="c6">04/10/2017</i><i class="c7">Wed</i><i class="c8">25/10/2017</i><i class="c9">Ocean B<b>...</b></i><i class="c10">*</i><i class="c13">2,222.95</i><i class="c14">1,111.48</i><i class="c15">2,222.95</i><i class="c16">0.00</i><i class="c18">XML</i></div><div class="r" style="top:285px"><i class="c0" style="letter-spacing:-.45px">Kissimmee</i><i class="c1">West Haven Executi<b>...</b></i><i class="c2">3.7</i><i class="c3">Roomonly</i><i class="c4">Villa, 4 Bedroo<b>...</b></i><i class="c5">Wed</i><i class="c6">04/10/2017</i><i class="c7">Wed</i><i class="c8">25/10/2017</i><i class="c9">Tourico <b>...</b></i><i class="c13">2,252.66</i><i class="c14">1,126.33</i><i class="c15">2,252.66</i><i class="c16">0.00</i><i class="c18">XML</i></div><div class="r" style="top:300px"><i class="c0">Orlando Ar<b>...</b></i><i class="c1">Disney Area Executiv<b>...</b></i><i class="c2">Exe<b>...</b></i><i class="c3">Room Only</i><i class="c4">5 Bedroom Exe<b>...</b></i><i class="c5">Wed</i><i class="c6">04/10/2017</i><i class="c7">Wed</i><i class="c8">25/10/2017</i><i class="c9">Ocean B<b>...</b></i><i class="c10">*</i><i class="c13">2,262.30</i><i class="c14">1,131.15</i><i class="c15">2,262.30</i><i class="c16">0.00</i><i class="c18">XML</i></div><div class="r" style="top:315px"><i class="c0">Orlando Ar<b>...</b></i><i class="c1">West Haven Executi<b>...</b></i><i class="c2">Exe<b>...</b></i><i class="c3">Room Only</i><i class="c4">4 Bedroom Exe<b>...</b></i><i class="c5">Wed</i><i class="c6">04/10/2017</i><i class="c7">Wed</i><i class="c8">25/10/2017</i><i class="c9">Ocean B<b>...</b></i><i class="c10">*</i><i class="c13">2,274.59</i><i class="c14">1,137.30</i><i class="c15">2,274.59</i><i class="c16">0.00</i><i class="c18">XML</i></div><div class="r" style="top:330px"><i class="c0">Orlando Ar<b>...</b></i><i class="c1">Glenbrook Executive <b>...</b></i><i class="c2">Exe<b>...</b></i><i class="c3">Room Only</i><i class="c4">4 Bedroom Exe<b>...</b></i><i class="c5">Wed</i><i class="c6">04/10/2017</i><i class="c7">Wed</i><i class="c8">25/10/2017</i><i class="c9">Ocean B<b>...</b></i><i class="c10">*</i><i class="c13">2,274.59</i><i class="c14">1,137.30</i><i class="c15">2,274.59</i><i class="c16">0.00</i><i class="c18">XML</i></div><div class="r" style="top:345px"><i class="c0">Orlando Ar<b>...</b></i><i class="c1">Southern Dunes Exe<b>...</b></i><i class="c2">Exe<b>...</b></i><i class="c3">Room Only</i><i class="c4">5 Bedroom Exe<b>...</b></i><i class="c5">Wed</i><i class="c6">04/10/2017</i><i class="c7">Wed</i><i class="c8">25/10/2017</i><i class="c9">Ocean B<b>...</b></i><i class="c10">*</i><i class="c13">2,286.89</i><i class="c14">1,143.45</i><i class="c15">2,286.89</i><i class="c16">0.00</i><i class="c18">XML</i></div><div class="r" style="top:360px"><i class="c0">Orlando Ar<b>...</b></i><i class="c1">West Haven Executi<b>...</b></i><i class="c2">Exe<b>...</b></i><i class="c3">Room Only</i><i class="c4">5 Bedroom Exe<b>...</b></i><i class="c5">Wed</i><i class="c6">04/10/2017</i><i class="c7">Wed</i><i class="c8">25/10/2017</i><i class="c9">Ocean B<b>...</b></i><i class="c10">*</i><i class="c13">2,286.89</i><i class="c14">1,143.45</i><i class="c15">2,286.89</i><i class="c16">0.00</i><i class="c18">XML</i></div><div class="r" style="top:375px"><i class="c0">Orlando Ar<b>...</b></i><i class="c1">Marbella Executive H<b>...</b></i><i class="c2">Exe<b>...</b></i><i class="c3">Room Only</i><i class="c4">5 Bedroom Exe<b>...</b></i><i class="c5">Wed</i><i class="c6">04/10/2017</i><i class="c7">Wed</i><i class="c8">25/10/2017</i><i class="c9">Ocean B<b>...</b></i><i class="c10">*</i><i class="c13">2,286.89</i><i class="c14">1,143.45</i><i class="c15">2,286.89</i><i class="c16">0.00</i><i class="c18">XML</i></div><div class="r" style="top:390px"><i class="c0">Orlando Ar<b>...</b></i><i class="c1">Legacy Park Executiv<b>...</b></i><i class="c2">Exe<b>...</b></i><i class="c3">Room Only</i><i class="c4">5 Bedroom Exe<b>...</b></i><i class="c5">Wed</i><i class="c6">04/10/2017</i><i class="c7">Wed</i><i class="c8">25/10/2017</i><i class="c9">Ocean B<b>...</b></i><i class="c10">*</i><i class="c13">2,286.89</i><i class="c14">1,143.45</i><i class="c15">2,286.89</i><i class="c16">0.00</i><i class="c18">XML</i></div><div class="r" style="top:405px"><i class="c0">Orlando Ar<b>...</b></i><i class="c1">High Grove Executiv<b>...</b></i><i class="c2">Exe<b>...</b></i><i class="c3">Room Only</i><i class="c4">5 Bedroom Exe<b>...</b></i><i class="c5">Wed</i><i class="c6">04/10/2017</i><i class="c7">Wed</i><i class="c8">25/10/2017</i><i class="c9">Ocean B<b>...</b></i><i class="c10">*</i><i class="c13">2,286.89</i><i class="c14">1,143.45</i><i class="c15">2,286.89</i><i class="c16">0.00</i><i class="c18">XML</i></div><div class="r" style="top:420px"><i class="c0">Orlando Ar<b>...</b></i><i class="c1">Calabay Parc At Tow<b>...</b></i><i class="c2">Exe<b>...</b></i><i class="c3">Room Only</i><i class="c4">5 Bedroom Exe<b>...</b></i><i class="c5">Wed</i><i class="c6">04/10/2017</i><i class="c7">Wed</i><i class="c8">25/10/2017</i><i class="c9">Ocean B<b>...</b></i><i class="c10">*</i><i class="c13">2,286.89</i><i class="c14">1,143.45</i><i class="c15">2,286.89</i><i class="c16">0.00</i><i class="c18">XML</i></div><div class="r" style="top:435px"><i class="c0">Orlando Ar<b>...</b></i><i class="c1">Calabay Parc Executi<b>...</b></i><i class="c2">Exe<b>...</b></i><i class="c3">Room Only</i><i class="c4">5 Bedroom Exe<b>...</b></i><i class="c5">Wed</i><i class="c6">04/10/2017</i><i class="c7">Wed</i><i class="c8">25/10/2017</i><i class="c9">Ocean B<b>...</b></i><i class="c10">*</i><i class="c13">2,286.89</i><i class="c14">1,143.45</i><i class="c15">2,286.89</i><i class="c16">0.00</i><i class="c18">XML</i></div><div class="r" style="top:450px"><i class="c0">Orlando Ar<b>...</b></i><i class="c1">Orange Tree Executi<b>...</b></i><i class="c2">Exe<b>...</b></i><i class="c3">Room Only</i><i class="c4">5 Bedroom Exe<b>...</b></i><i class="c5">Wed</i><i class="c6">04/10/2017</i><i class="c7">Wed</i><i class="c8">25/10/2017</i><i class="c9">Ocean B<b>...</b></i><i class="c10">*</i><i class="c13">2,286.89</i><i class="c14">1,143.45</i><i class="c15">2,286.89</i><i class="c16">0.00</i><i class="c18">XML</i></div><div class="r" style="top:465px"><i class="c0">Orlando Ar<b>...</b></i><i class="c1">Sandy Ridge Executi<b>...</b></i><i class="c2">Exe<b>...</b></i><i class="c3">Room Only</i><i class="c4">5 Bedroom Exe<b>...</b></i><i class="c5">Wed</i><i class="c6">04/10/2017</i><i class="c7">Wed</i><i class="c8">25/10/2017</i><i class="c9">Ocean B<b>...</b></i><i class="c10">*</i><i class="c13">2,286.89</i><i class="c14">1,143.45</i><i class="c15">2,286.89</i><i class="c16">0.00</i><i class="c18">XML</i></div><div class="r" style="top:480px"><i class="c0" style="letter-spacing:-.45px">Kissimmee</i><i class="c1">Calabay Parc Executi<b>...</b></i><i class="c2">3.7</i><i class="c3">Roomonly</i><i class="c4">Villa, 4 Bedroo<b>...</b></i><i class="c5">Wed</i><i class="c6">04/10/2017</i><i class="c7">Wed</i><i class="c8">25/10/2017</i><i class="c9">Tourico <b>...</b></i><i class="c13">2,298.62</i><i class="c14">1,149.31</i><i class="c15">2,298.62</i><i class="c16">0.00</i><i class="c18">XML</i></div><div class="r" style="top:495px"><i class="c0" style="letter-spacing:-.45px">Kissimmee</i><i class="c1">Disney Area Executive</i><i class="c2">3.7</i><i class="c3">Roomonly</i><i class="c4">Standard, 5 Be<b>...</b></i><i class="c5">Wed</i><i class="c6">04/10/2017</i><i class="c7">Wed</i><i class="c8">25/10/2017</i><i class="c9">Tourico <b>...</b></i><i class="c13">2,313.60</i><i class="c14">1,156.80</i><i class="c15">2,313.60</i><i class="c16">0.00</i><i class="c18">XML</i></div><div class="r" style="top:510px"><i class="c0">Orlando Ar<b>...</b></i><i class="c1">Highlands Reserve E<b>...</b></i><i class="c2">Exe<b>...</b></i><i class="c3">Room Only</i><i class="c4">5 Bedroom Exe<b>...</b></i><i class="c5">Wed</i><i class="c6">04/10/2017</i><i class="c7">Wed</i><i class="c8">25/10/2017</i><i class="c9">Ocean B<b>...</b></i><i class="c10">*</i><i class="c13">2,328.69</i><i class="c14">1,164.35</i><i class="c15">2,328.69</i><i class="c16">0.00</i><i class="c18">XML</i></div><div class="r" style="top:525px"><i class="c0">Orlando Ar<b>...</b></i><i class="c1">Trafalgar Village Exe<b>...</b></i><i class="c2">Exe<b>...</b></i><i class="c3">Room Only</i><i class="c4">5 Bedroom Exe<b>...</b></i><i class="c5">Wed</i><i class="c6">04/10/2017</i><i class="c7">Wed</i><i class="c8">25/10/2017</i><i class="c9">Ocean B<b>...</b></i><i class="c10">*</i><i class="c13">2,407.38</i><i class="c14">1,203.69</i><i class="c15">2,407.38</i><i class="c16">0.00</i><i class="c18">XML</i></div><div class="r" style="top:540px"><i class="c0">Orlando Ar<b>...</b></i><i class="c1">Calabay Parc Executi<b>...</b></i><i class="c2">Exe<b>...</b></i><i class="c3">Room Only</i><i class="c4">5 Bedroom Exe<b>...</b></i><i class="c5">Wed</i><i class="c6">04/10/2017</i><i class="c7">Wed</i><i class="c8">25/10/2017</i><i class="c9">Ocean B<b>...</b></i><i class="c10">*</i><i class="c13">2,407.38</i><i class="c14">1,203.69</i><i class="c15">2,407.38</i><i class="c16">0.00</i><i class="c18">XML</i></div><div class="r" style="top:555px"><i class="c0" style="letter-spacing:-.45px">Kissimmee</i><i class="c1">Calabay Parc Executi<b>...</b></i><i class="c2">3.7</i><i class="c3">Roomonly</i><i class="c4">Standard, 4 Be<b>...</b></i><i class="c5">Wed</i><i class="c6">04/10/2017</i><i class="c7">Wed</i><i class="c8">25/10/2017</i><i class="c9">Tourico <b>...</b></i><i class="c13">2,439.32</i><i class="c14">1,219.66</i><i class="c15">2,439.32</i><i class="c16">0.00</i><i class="c18">XML</i></div><div class="r" style="top:570px"><i class="c0" style="letter-spacing:-.45px">Kissimmee</i><i class="c1">Trafalgar Village Exe<b>...</b></i><i class="c2">3.7</i><i class="c3">Roomonly</i><i class="c4">Standard, 4 Be<b>...</b></i><i class="c5">Wed</i><i class="c6">04/10/2017</i><i class="c7">Wed</i><i class="c8">25/10/2017</i><i class="c9">Tourico <b>...</b></i><i class="c13">2,439.32</i><i class="c14">1,219.66</i><i class="c15">2,439.32</i><i class="c16">0.00</i><i class="c18">XML</i></div></div></div><div class="a" id="sb"><div class="sbb" style="top:0"><svg style="left:3px;top:5px" width="7" height="4" viewBox="0 0 7 4"><path d="M0 4 L3.5 .5 L7 4 Z" fill="#000"/></svg></div><div class="sbb" style="top:16px;height:346px"></div><div class="sbb" style="top:587px"><svg style="left:3px;top:5px" width="7" height="4" viewBox="0 0 7 4"><path d="M0 0 L7 0 L3.5 3.5 Z" fill="#000"/></svg></div></div><div class="a t" style="left:222.5px;top:782.5px;letter-spacing:.04px">First portion: 9.2 sec, total search time: 27.6 sec</div><div class="a" id="ibt"><span style="position:absolute;left:8px;top:3px;font:bold 17px 'Liberation Serif',serif;line-height:16px;color:#0c4aa6">i</span></div><div class="a" id="btl"></div><div class="a bt" style="left:216px;width:52px;padding-left:2.5px;"><span class="t" style="letter-spacing:-.3px">Summary</span></div><div class="a bt" style="left:268px;width:41px;padding-left:2.5px;"><span class="t" style="letter-spacing:0">Search</span></div><div class="a bt" style="left:309px;width:51px;padding-left:2.5px;background:#c0ffc0;"><span class="t" style="letter-spacing:0">Car MCO</span></div><div class="a bt" style="left:360px;width:65px;padding-left:3px;background:#000080;color:#fff;border-radius:0 0 3px 3px;border-right:0;top:805px;padding-top:3px;height:17px;"><span class="t" style="letter-spacing:0">Acc 2A MCO</span></div><div class="a bt" style="left:425px;width:97px;padding-left:4.5px;"><span class="t" style="letter-spacing:-.28px">Financial Summary</span></div><div class="a t" style="left:764.5px;top:831.5px">User: 427 - Shamaura Prause</div><div class="a t" style="left:916.5px;top:831.5px">Retailer: 'Ocean-Florida'</div><div class="a t" style="left:1043px;top:831.5px">Client: none</div><div class="a t" style="left:1539px;top:831.5px">17:01 GMT</div><div class="a" style="left:0;top:857px;width:1600px;height:1px;background:#fff"></div></body></html>
